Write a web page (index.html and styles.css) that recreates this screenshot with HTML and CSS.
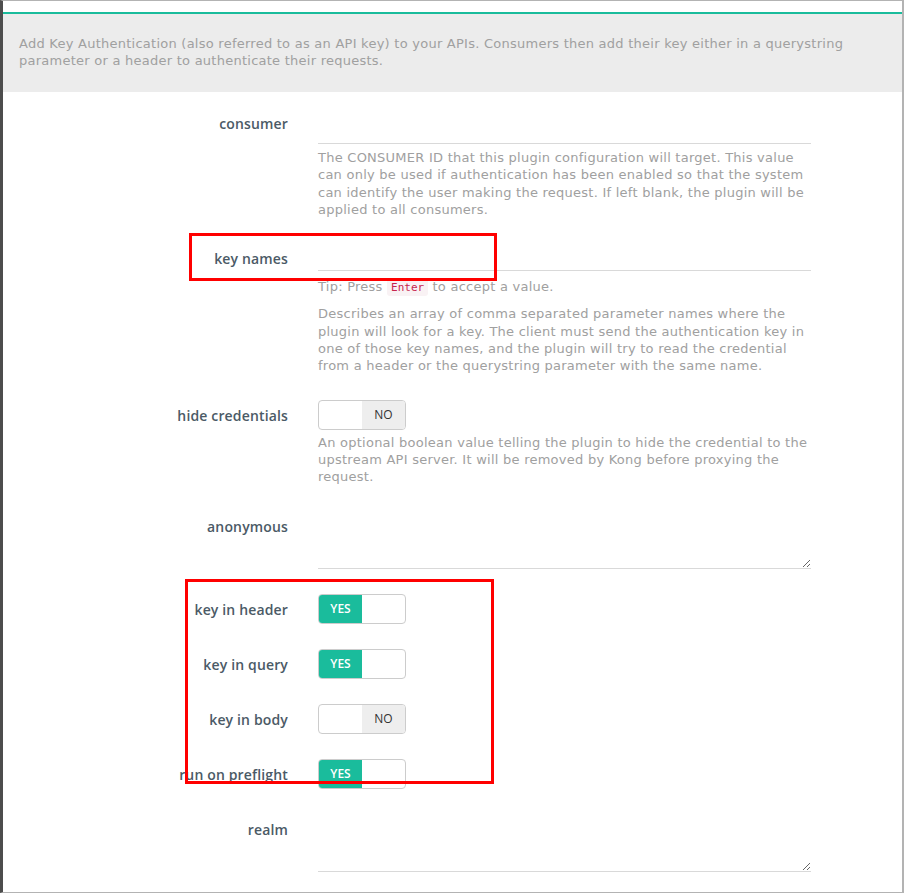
FILE: index.html
```html
<!DOCTYPE html>
<html lang="en">
<head>
    <meta charset="UTF-8">
    <meta name="viewport" content="width=device-width, initial-scale=1.0">
    <title>Key Authentication</title>
    <link rel="stylesheet" href="styles.css">
</head>
<body>
    <div class="frame">
        <div class="accent"></div>
        <div class="intro">
            Add Key Authentication (also referred to as an API key) to your APIs. Consumers then add their key either in a querystring parameter or a header to authenticate their requests.
        </div>

        <form class="form">
            <div class="row">
                <label class="label">consumer</label>
                <div class="field">
                    <input type="text" class="input input-tall">
                    <p class="help help-first">The CONSUMER ID that this plugin configuration will target. This value can only be used if authentication has been enabled so that the system can identify the user making the request. If left blank, the plugin will be applied to all consumers.</p>
                </div>
            </div>

            <div class="row">
                <label class="label">key names</label>
                <div class="field">
                    <input type="text" class="input">
                    <p class="help tip">Tip: Press <code>Enter</code> to accept a value.</p>
                    <p class="help">Describes an array of comma separated parameter names where the plugin will look for a key. The client must send the authentication key in one of those key names, and the plugin will try to read the credential from a header or the querystring parameter with the same name.</p>
                </div>
            </div>

            <div class="row">
                <label class="label">hide credentials</label>
                <div class="field">
                    <div class="toggle off"><span class="yes">YES</span><span class="no">NO</span></div>
                    <p class="help help-toggle">An optional boolean value telling the plugin to hide the credential to the upstream API server. It will be removed by Kong before proxying the request.</p>
                </div>
            </div>

            <div class="row">
                <label class="label">anonymous</label>
                <div class="field">
                    <textarea class="area"></textarea>
                </div>
            </div>

            <div class="row">
                <label class="label">key in header</label>
                <div class="field">
                    <div class="toggle on"><span class="yes">YES</span><span class="no">NO</span></div>
                </div>
            </div>

            <div class="row">
                <label class="label">key in query</label>
                <div class="field">
                    <div class="toggle on"><span class="yes">YES</span><span class="no">NO</span></div>
                </div>
            </div>

            <div class="row">
                <label class="label">key in body</label>
                <div class="field">
                    <div class="toggle off"><span class="yes">YES</span><span class="no">NO</span></div>
                </div>
            </div>

            <div class="row">
                <label class="label">run on preflight</label>
                <div class="field">
                    <div class="toggle on"><span class="yes">YES</span><span class="no">NO</span></div>
                </div>
            </div>

            <div class="row">
                <label class="label">realm</label>
                <div class="field">
                    <textarea class="area"></textarea>
                </div>
            </div>
        </form>

        <!-- annotation boxes drawn over the screenshot -->
        <div class="mark mark-names"></div>
        <div class="mark mark-flags"></div>
    </div>
</body>
</html>
```

FILE: styles.css
```css
body {
    margin: 0;
    font-family: "Open Sans", "Liberation Sans", sans-serif;
    background-color: #fff;
}
.frame {
    position: relative;
    box-sizing: border-box;
    height: 893px;
    border: 1px solid #b3b3b3;
    border-left: 3px solid #4d4d4d;
    border-right: 2px solid #b3b3b3;
    padding-top: 11px;
    overflow: hidden;
}
.accent {
    height: 2px;
    background-color: #1abc9c;
}
.intro {
    background-color: #ececec;
    color: #a0a0a0;
    font-family: "DejaVu Sans", sans-serif;
    font-size: 13px;
    letter-spacing: 0.25px;
    line-height: 17px;
    padding: 21px 40px 23px 16px;
}
.form {
    padding-top: 16px;
}
.row {
    display: grid;
    grid-template-columns: 285px 493px;
    column-gap: 30px;
    margin-bottom: 25px;
}
.label {
    text-align: right;
    font-size: 14px;
    letter-spacing: 0.15px;
    font-weight: 600;
    color: #4b5a66;
    line-height: 17px;
    padding-top: 7px;
}
.field {
    display: flex;
    flex-direction: column;
    align-items: flex-start;
}
.input {
    box-sizing: border-box;
    width: 100%;
    height: 28px;
    border: none;
    border-bottom: 1px solid #d9d9d9;
    outline: none;
    padding: 0;
}
.input-tall {
    height: 36px;
}
.area {
    box-sizing: border-box;
    width: 100%;
    height: 58px;
    border: none;
    border-bottom: 1px solid #d9d9d9;
    outline: none;
    resize: vertical;
    padding: 0;
}
.help {
    margin: 9px 0 0;
    color: #a0a0a0;
    font-family: "DejaVu Sans", sans-serif;
    font-size: 13px;
    letter-spacing: 0.25px;
    line-height: 17.3px;
}
.help-first {
    margin-top: 5px;
}
.tip {
    margin-top: 7px;
}
.help-toggle {
    margin-top: 4px;
}
code {
    font-family: "DejaVu Sans Mono", monospace;
    font-size: 11px;
    letter-spacing: 0;
    color: #c7254e;
    background-color: #f9f2f4;
    border-radius: 3px;
    padding: 2px 4px;
}
.toggle {
    display: flex;
    box-sizing: border-box;
    width: 88px;
    height: 30px;
    border: 1px solid #cccccc;
    border-radius: 4px;
    overflow: hidden;
    font-size: 12px;
}
.toggle span {
    flex: 1;
    display: flex;
    align-items: center;
    justify-content: center;
}
.toggle.on .yes {
    background-color: #1abc9c;
    color: #fff;
    font-weight: 600;
}
.toggle.on .no {
    color: transparent;
}
.toggle.off .yes {
    color: transparent;
}
.toggle.off .no {
    background-color: #eeeeee;
    color: #333;
}
.mark {
    position: absolute;
    border: 3px solid #ff0000;
}
.mark-names {
    left: 186px;
    top: 232px;
    width: 302px;
    height: 42px;
}
.mark-flags {
    left: 182px;
    top: 578px;
    width: 303px;
    height: 199px;
}
```
